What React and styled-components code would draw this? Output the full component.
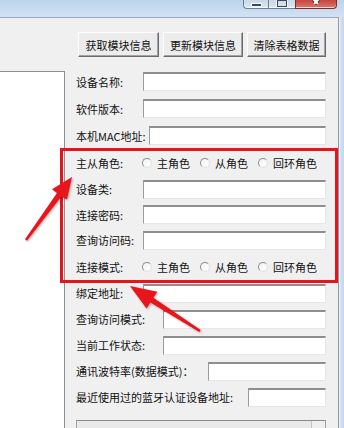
import React from 'react'
import styled, { createGlobalStyle } from 'styled-components'

const GlobalStyle = createGlobalStyle`
    html, body {
        margin: 0;
        padding: 0;
        background: #f0f0f0;
    }
    body {
        font-family: "Noto Sans CJK SC", "Liberation Sans", sans-serif;
        font-size: 11px;
        color: #111;
    }
`

const labels = {
    top: [
        { text: '设备名称:', w: 67 },
        { text: '软件版本:', w: 67 },
        { text: '本机MAC地址:', w: 73 },
    ],
    bottom: [
        { text: '绑定地址:', w: 67 },
        { text: '查询访问模式:', w: 87 },
        { text: '当前工作状态:', w: 87 },
        { text: '通讯波特率(数据模式)：', w: 132 },
        { text: '最近使用过的蓝牙认证设备地址:', w: 172 },
    ],
}

const roles = ['主角色', '从角色', '回环角色']

const RoleRadios = () => (
    <RadioGroup>
        {roles.map((r) => (
            <RadioItem key={r}>
                <RadioDot />
                {r}
            </RadioItem>
        ))}
    </RadioGroup>
)

const Arrows = () => (
    <ArrowLayer width="344" height="428" viewBox="0 0 344 428">
        {/* arrow pointing at the group from lower left */}
        <polygon points="27,240.7 61.4,196.5 67,199.6 72,177 52,189.3 57,193 25,239.3" />
        {/* arrow pointing at the group from below */}
        <polygon points="200.7,329.9 153.4,297.7 157.3,291.7 130,286 146.5,308.5 150.4,302.5 199.3,332.1" />
    </ArrowLayer>
)

const App = () => {
    return (
        <>
            <GlobalStyle />
            <Screen>
                <TitleBar>
                    <Controls>
                        <MinButton><MinGlyph /></MinButton>
                        <MaxButton><MaxGlyph /></MaxButton>
                        <CloseButton>
                            <svg width="14" height="8" viewBox="0 0 14 8">
                                <path d="M1 -4 L9 4 M13 -4 L5 4" stroke="#5a1612" strokeWidth="3.4" />
                                <path d="M1 -4 L9 4 M13 -4 L5 4" stroke="#fff" strokeWidth="2" />
                            </svg>
                        </CloseButton>
                    </Controls>
                </TitleBar>
                <Frame>
                    <Client>
                        <ListBox />
                        <Panel>
                            <ButtonBar>
                                <Button w={81}>获取模块信息</Button>
                                <Button w={80}>更新模块信息</Button>
                                <Button w={79}>清除表格数据</Button>
                            </ButtonBar>
                            <Form>
                                {labels.top.map((l) => (
                                    <Row key={l.text} h={27}>
                                        <Label w={l.w}>{l.text}</Label>
                                        <TextBox />
                                    </Row>
                                ))}
                                <Marked>
                                    <Row h={27}>
                                        <Label w={67}>主从角色:</Label>
                                        <RoleRadios />
                                    </Row>
                                    <Row h={26}>
                                        <Label w={67}>设备类:</Label>
                                        <TextBox />
                                    </Row>
                                    <Row h={25}>
                                        <Label w={67}>连接密码:</Label>
                                        <TextBox />
                                    </Row>
                                    <Row h={26}>
                                        <Label w={67}>查询访问码:</Label>
                                        <TextBox />
                                    </Row>
                                    <Row h={27}>
                                        <Label w={67}>连接模式:</Label>
                                        <RoleRadios />
                                    </Row>
                                </Marked>
                                {labels.bottom.map((l) => (
                                    <Row key={l.text} h={26}>
                                        <Label w={l.w}>{l.text}</Label>
                                        <TextBox />
                                    </Row>
                                ))}
                            </Form>
                            <Combo>
                                <ComboArrow />
                            </Combo>
                        </Panel>
                    </Client>
                    <RightEdge />
                </Frame>
                <Arrows />
            </Screen>
        </>
    )
}

export default App

const Screen = styled.div`
    position: relative;
    width: 344px;
    height: 428px;
    overflow: hidden;
    background: #cfdff0;
`

const TitleBar = styled.div`
    display: flex;
    justify-content: flex-end;
    align-items: flex-start;
    height: 17px;
    padding-right: 7px;
    background: linear-gradient(to bottom, #bcd3ec, #d2e2f3);
`

const Controls = styled.div`
    display: flex;
    height: 9px;
`

const CtrlButton = styled.div`
    position: relative;
    display: flex;
    justify-content: center;
    align-items: flex-start;
    height: 8px;
    border: 1px solid #6d7f96;
    border-top: none;
    background: linear-gradient(to bottom, #c9d8e8, #dde7f2);
    box-shadow: inset 0 -1px 0 rgba(255, 255, 255, 0.7);
    overflow: hidden;
`

const MinButton = styled(CtrlButton)`
    width: 24px;
    border-right: none;
    border-bottom-left-radius: 4px;
`

const MaxButton = styled(CtrlButton)`
    width: 26px;
    border-right: none;
`

const CloseButton = styled(CtrlButton)`
    width: 40px;
    border-color: #7f2a26;
    border-bottom-right-radius: 4px;
    background: linear-gradient(to bottom, #c6463e, #d8786f);
`

const MinGlyph = styled.div`
    margin-top: 3px;
    width: 9px;
    height: 2px;
    background: #3a4a5c;
    border: 1px solid #f4f8fc;
`

const MaxGlyph = styled.div`
    margin-top: -1px;
    width: 8px;
    height: 5px;
    border: 1px solid #3a4a5c;
    border-top-width: 2px;
    box-shadow: 0 0 0 1px #f4f8fc;
`

const Frame = styled.div`
    display: flex;
    height: 411px;
`

const Client = styled.div`
    display: grid;
    grid-template-columns: 65px 1fr;
    width: 339px;
    box-sizing: border-box;
    background: #f0f0f0;
    border-top: 1px solid #9aabbf;
    border-right: 1px solid #8d9aab;
`

const RightEdge = styled.div`
    flex: 1;
    background: linear-gradient(to right, #eef4fa, #cfdff0 40%, #c4d7ec);
`

const ListBox = styled.div`
    margin-top: 53px;
    box-sizing: border-box;
    background: #fff;
    border-top: 1px solid #8a8f98;
    border-right: 1px solid #8a8f98;
`

const Panel = styled.div`
    display: flex;
    flex-direction: column;
    padding: 14px 12px 0 11px;
    min-width: 0;
`

const ButtonBar = styled.div`
    display: flex;
    justify-content: flex-end;
    gap: 4px;
`

const Button = styled.div`
    display: flex;
    align-items: center;
    justify-content: center;
    width: ${({ w }) => w}px;
    height: 25px;
    box-sizing: border-box;
    background: #ececec;
    border: 1px solid;
    border-color: #fdfdfd #6a6a6a #6a6a6a #fdfdfd;
    box-shadow: inset -1px -1px 0 #a3a3a3;
    color: #111;
    white-space: nowrap;
`

const Form = styled.div`
    display: flex;
    flex-direction: column;
    margin-top: 11px;
`

const Row = styled.div`
    display: flex;
    align-items: center;
    height: ${({ h }) => h}px;
`

const Label = styled.div`
    flex: none;
    width: ${({ w }) => w}px;
    white-space: nowrap;
    line-height: 14px;
`

const TextBox = styled.div`
    flex: 1;
    height: 19px;
    box-sizing: border-box;
    background: #fff;
    border: 1px solid #e6e6e6;
    border-top: 2px solid #8e8e8e;
    border-left: 1px solid #9b9b9b;
`

const Marked = styled.div`
    position: relative;
    display: flex;
    flex-direction: column;

    /* red annotation frame */
    &::after {
        content: "";
        position: absolute;
        top: -1px;
        bottom: -3px;
        left: -16px;
        right: -12px;
        border: 3px solid #e3151d;
        pointer-events: none;
    }
`

const RadioGroup = styled.div`
    display: flex;
    align-items: center;
    margin-left: -1px;
`

const RadioItem = styled.div`
    display: flex;
    align-items: center;
    gap: 5px;
    margin-right: 10px;
    white-space: nowrap;
`

const RadioDot = styled.span`
    width: 10px;
    height: 10px;
    box-sizing: border-box;
    border-radius: 50%;
    border: 1px solid;
    border-color: #8f8f8f #e2e2e2 #e2e2e2 #8f8f8f;
    background: radial-gradient(circle at 60% 60%, #ffffff, #ebebeb);
`

const Combo = styled.div`
    position: relative;
    display: flex;
    justify-content: flex-end;
    margin-top: 10px;
    height: 20px;
    box-sizing: border-box;
    background: #e9e9e9;
    border: 1px solid #a2a2a2;
    border-top-color: #8a8a8a;
`

const ComboArrow = styled.div`
    width: 13px;
    border-left: 1px solid #c4c4c4;
    background: #efefef;
`

const ArrowLayer = styled.svg`
    position: absolute;
    left: 0;
    top: 0;
    pointer-events: none;
    fill: #e8161c;
    filter: drop-shadow(1px 1px 1px rgba(90, 0, 0, 0.35));
`
